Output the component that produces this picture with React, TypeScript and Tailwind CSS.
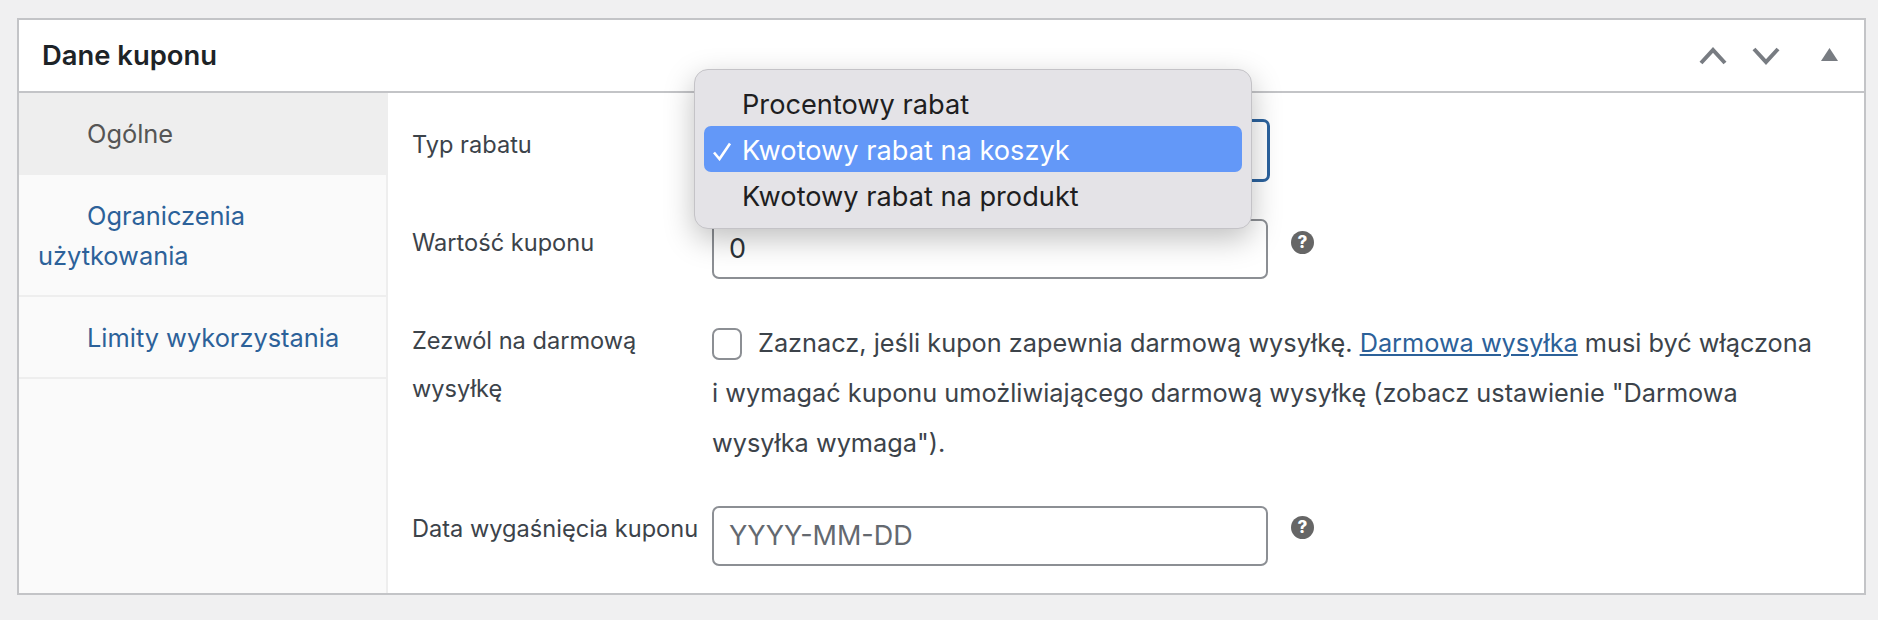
const font = { fontFamily: "Inter, 'Noto Sans', sans-serif" };

const HelpTip = () => (
  <div className="ml-[23px] flex h-[23px] w-[23px] shrink-0 items-center justify-center rounded-full bg-[#666666] text-[17px] leading-none font-extrabold text-white">
    ?
  </div>
);

const tabs = [
  { id: "general", lines: ["Ogólne"], active: true },
  { id: "limits", lines: ["Ograniczenia", "użytkowania"] },
  { id: "usage", lines: ["Limity wykorzystania"] },
];

const SelectPopup = () => (
  <div className="absolute top-[-53px] left-[-21px] h-[160px] w-[558px] rounded-[14px] border border-[#c4c3c7] bg-[#e4e3e7] px-[9px] pt-[10px] text-[27.2px] leading-[49px] text-[#1e1e21] shadow-[0_10px_30px_rgba(0,0,0,0.25)]">
    <div className="h-[46px] pl-[38px]">Procentowy rabat</div>
    <div className="relative h-[46px] rounded-[7px] bg-[#6398f8] pl-[38px] text-white">
      <svg className="absolute top-[16px] left-[8px]" width="20" height="19" viewBox="0 0 20 19" fill="none">
        <path d="M2 10.5 L7.5 17 L18 1.5" stroke="white" strokeWidth="2.6" />
      </svg>
      Kwotowy rabat na koszyk
    </div>
    <div className="h-[46px] pl-[38px]">Kwotowy rabat na produkt</div>
  </div>
);

export default function App() {
  return (
    <div className="h-[620px] w-[1878px] overflow-hidden bg-[#f0f0f1] pt-[18px] pl-[17px]" style={font}>
      <div className="h-[577px] w-[1849px] border-2 border-[#c3c4c7] bg-white">
        <div className="flex h-[73px] items-center justify-between border-b-2 border-[#c3c4c7] pr-[26px] pl-[23px]">
          <h2 className="text-[27.4px] font-semibold text-[#1d2327]">Dane kuponu</h2>
          <div className="flex items-center">
            <svg width="30" height="20" viewBox="0 0 30 20" fill="none">
              <path d="M3 17 L15 4 L27 17" stroke="#787c82" strokeWidth="4" />
            </svg>
            <svg className="ml-[23px]" width="30" height="20" viewBox="0 0 30 20" fill="none">
              <path d="M3 3 L15 16 L27 3" stroke="#787c82" strokeWidth="4" />
            </svg>
            <svg className="mb-[3px] ml-[40px]" width="17" height="13" viewBox="0 0 17 13">
              <polygon points="8.5,0 17,13 0,13" fill="#787c82" />
            </svg>
          </div>
        </div>
        <div className="flex h-[500px]">
          <ul className="w-[369px] shrink-0 border-r-2 border-[#eeeeee] bg-[#fafafa] text-[25.4px]">
            {tabs.map((tab) => (
              <li
                key={tab.id}
                className={
                  tab.active
                    ? "border-b-2 border-[#eeeeee] bg-[#eeeeee] px-[19px] pt-[21px] pb-[19px] leading-[40px] text-[#555555]"
                    : "border-b-2 border-[#eeeeee] px-[19px] pt-[21px] pb-[19px] leading-[40px] text-[#2c6199]"
                }
              >
                {tab.lines.map((line, i) => (
                  <div key={line} className={i === 0 ? "pl-[49px]" : ""}>
                    {line}
                  </div>
                ))}
              </li>
            ))}
          </ul>
          <div className="min-w-0 flex-1 pt-[26px] pl-[24px] text-[#3c434a]">
            <div className="flex">
              <div className="w-[300px] shrink-0 pt-[2px] text-[23.6px] leading-[48px]">Typ rabatu</div>
              <div className="relative h-[63px] w-[558px] rounded-[7px] border-[3px] border-[#2c639e]">
                <SelectPopup />
              </div>
            </div>
            <div className="mt-[37px] flex">
              <div className="w-[300px] shrink-0 text-[23.6px] leading-[48px]">Wartość kuponu</div>
              <div className="flex h-[60px] w-[556px] shrink-0 items-center rounded-[7px] border-2 border-[#8c8f94] px-[15px] text-[27px] text-[#2c3338]">
                0
              </div>
              <div className="mt-[12px]">
                <HelpTip />
              </div>
            </div>
            <div className="mt-[38px] flex">
              <div className="w-[300px] shrink-0 text-[23.6px] leading-[48px]">
                Zezwól na darmową
                <br />
                wysyłkę
              </div>
              <div className="w-[1110px] pt-px text-[25.3px] leading-[50px]">
                <span className="mr-[16px] inline-block h-[32px] w-[30px] rounded-[7px] border-2 border-[#8c8f94] align-[-8px]" />
                Zaznacz, jeśli kupon zapewnia darmową wysyłkę.{" "}
                <a className="text-[#2c6199] underline">Darmowa wysyłka</a> musi być włączona i wymagać kuponu
                umożliwiającego darmową wysyłkę (zobacz ustawienie "Darmowa wysyłka wymaga").
              </div>
            </div>
            <div className="mt-[37px] flex">
              <div className="w-[300px] shrink-0 text-[23.6px] leading-[48px]">Data wygaśnięcia kuponu</div>
              <div className="mt-px flex h-[60px] w-[556px] shrink-0 items-center rounded-[7px] border-2 border-[#8c8f94] px-[15px] text-[27px] text-[#646970]">
                YYYY-MM-DD
              </div>
              <div className="mt-[11px]">
                <HelpTip />
              </div>
            </div>
          </div>
        </div>
      </div>
    </div>
  );
}
